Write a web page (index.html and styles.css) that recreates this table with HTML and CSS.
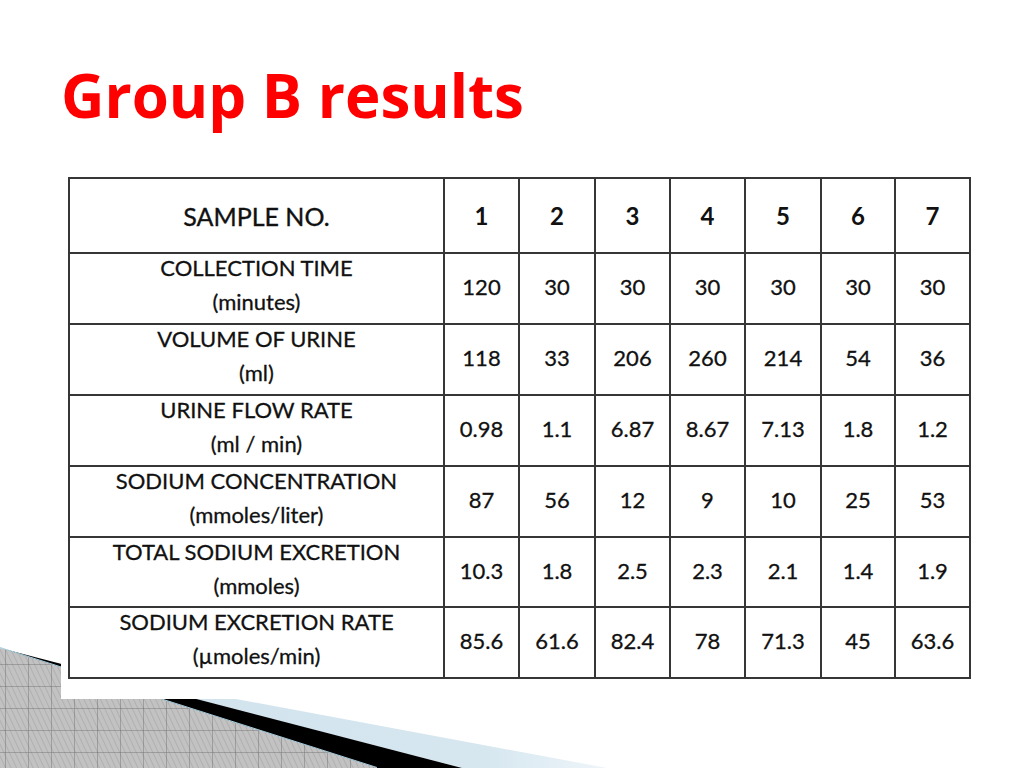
FILE: index.html
```html
<!DOCTYPE html>
<html lang="en">
<head>
<meta charset="utf-8">
<title>Group B results</title>
<link rel="stylesheet" href="styles.css">
</head>
<body>
<div class="slide">
  <svg class="deco" width="1024" height="768" viewBox="0 0 1024 768" aria-hidden="true">
    <defs>
      <pattern id="hatch" width="5" height="5" patternUnits="userSpaceOnUse" patternTransform="rotate(-25)">
        <rect width="5" height="5" fill="#c2c2c2"/>
        <line x1="0" y1="0" x2="0" y2="5" stroke="#a6a6a6" stroke-width="1.3"/>
      </pattern>
      <pattern id="grid" x="5" y="4" width="23" height="22" patternUnits="userSpaceOnUse">
        <path d="M0 0 V22 M0 0 H23" stroke="#6e6e6e" stroke-width="0.9" fill="none"/>
      </pattern>
      <linearGradient id="blue" x1="0" y1="0" x2="1" y2="0">
        <stop offset="0" stop-color="#cfe1ec"/>
        <stop offset="0.8" stop-color="#d6e7f0"/>
        <stop offset="1" stop-color="#eef5f9"/>
      </linearGradient>
    </defs>
    <polygon points="0,655 607,768 462,768 0,649" fill="url(#blue)"/>
    <polygon points="0,648 462,768 377,768" fill="#000"/>
    <polygon points="0,648 377,768 0,768" fill="url(#hatch)"/>
    <polygon points="0,648 377,768 0,768" fill="url(#grid)"/>
    <line x1="0" y1="647.5" x2="377" y2="767.5" stroke="#a9cfe0" stroke-width="1"/>
  </svg>

  <h1 class="title">Group B results</h1>

  <div class="panel">
    <table class="results">
      <colgroup>
        <col class="c-label">
        <col class="c-n1"><col class="c-n2"><col class="c-n3"><col class="c-n4"><col class="c-n5"><col class="c-n6"><col class="c-n7">
      </colgroup>
      <thead>
        <tr class="r-head">
          <th class="label-head">SAMPLE NO.</th>
          <th>1</th><th>2</th><th>3</th><th>4</th><th>5</th><th>6</th><th>7</th>
        </tr>
      </thead>
      <tbody>
        <tr class="r1">
          <td class="label"><span class="lines">COLLECTION TIME<br>(minutes)</span></td>
          <td>120</td><td>30</td><td>30</td><td>30</td><td>30</td><td>30</td><td>30</td>
        </tr>
        <tr class="r2">
          <td class="label"><span class="lines">VOLUME OF URINE<br>(ml)</span></td>
          <td>118</td><td>33</td><td>206</td><td>260</td><td>214</td><td>54</td><td>36</td>
        </tr>
        <tr class="r3">
          <td class="label"><span class="lines">URINE FLOW RATE<br>(ml / min)</span></td>
          <td>0.98</td><td>1.1</td><td>6.87</td><td>8.67</td><td>7.13</td><td>1.8</td><td>1.2</td>
        </tr>
        <tr class="r4">
          <td class="label"><span class="lines">SODIUM CONCENTRATION<br>(mmoles/liter)</span></td>
          <td>87</td><td>56</td><td>12</td><td>9</td><td>10</td><td>25</td><td>53</td>
        </tr>
        <tr class="r5">
          <td class="label"><span class="lines">TOTAL SODIUM EXCRETION<br>(mmoles)</span></td>
          <td>10.3</td><td>1.8</td><td>2.5</td><td>2.3</td><td>2.1</td><td>1.4</td><td>1.9</td>
        </tr>
        <tr class="r6">
          <td class="label"><span class="lines">SODIUM EXCRETION RATE<br>(µmoles/min)</span></td>
          <td>85.6</td><td>61.6</td><td>82.4</td><td>78</td><td>71.3</td><td>45</td><td>63.6</td>
        </tr>
      </tbody>
    </table>
  </div>
</div>
</body>
</html>
```

FILE: styles.css
```css
html, body {
  margin: 0;
  padding: 0;
  background: #ffffff;
}

.slide {
  position: relative;
  width: 1024px;
  height: 768px;
  overflow: hidden;
  background: #ffffff;
}

.deco {
  position: absolute;
  left: 0;
  top: 0;
  z-index: 0;
  pointer-events: none;
}

.title {
  position: relative;
  z-index: 1;
  margin: 0;
  padding: 59px 0 0 61px;
  height: 72px;
  font-family: "Open Sans", "DejaVu Sans", sans-serif;
  font-weight: 700;
  font-size: 60px;
  line-height: 72px;
  color: #ff0000;
  letter-spacing: 0;
}

.panel {
  position: relative;
  z-index: 1;
  margin: 34px 0 0 61px;
  width: 920px;
  padding: 12px 0 20px 7px;
  background: #ffffff;
  box-sizing: border-box;
}

.results {
  border-collapse: collapse;
  table-layout: fixed;
  width: 901px;
  font-family: "Lato", "Liberation Sans", sans-serif;
  color: #111111;
  -webkit-text-stroke: 0.3px #111111;
}

.results th,
.results td {
  border: 2px solid #363636;
  text-align: center;
  vertical-align: middle;
  padding: 0;
}

.c-label { width: 375px; }
.c-n1 { width: 75px; }
.c-n2 { width: 76px; }
.c-n3 { width: 75px; }
.c-n4 { width: 75px; }
.c-n5 { width: 76px; }
.c-n6 { width: 74px; }
.c-n7 { width: 75px; }

.r-head { height: 75px; }
.r1, .r2, .r3, .r4 { height: 71px; }
.r5 { height: 70px; }
.r6 { height: 71px; }

.results th {
  font-size: 24px;
  font-weight: 700;
  -webkit-text-stroke: 0;
}

.results th.label-head {
  font-size: 25px;
  font-weight: 400;
  -webkit-text-stroke: 0.35px #111111;
}

.results td {
  font-size: 22px;
  font-weight: 400;
  line-height: 34px;
  padding-bottom: 3px;
}

.results td.label {
  vertical-align: top;
  font-size: 22px;
  line-height: 34px;
  padding-bottom: 0;
}

.lines {
  display: block;
  margin-top: -3px;
}
```
